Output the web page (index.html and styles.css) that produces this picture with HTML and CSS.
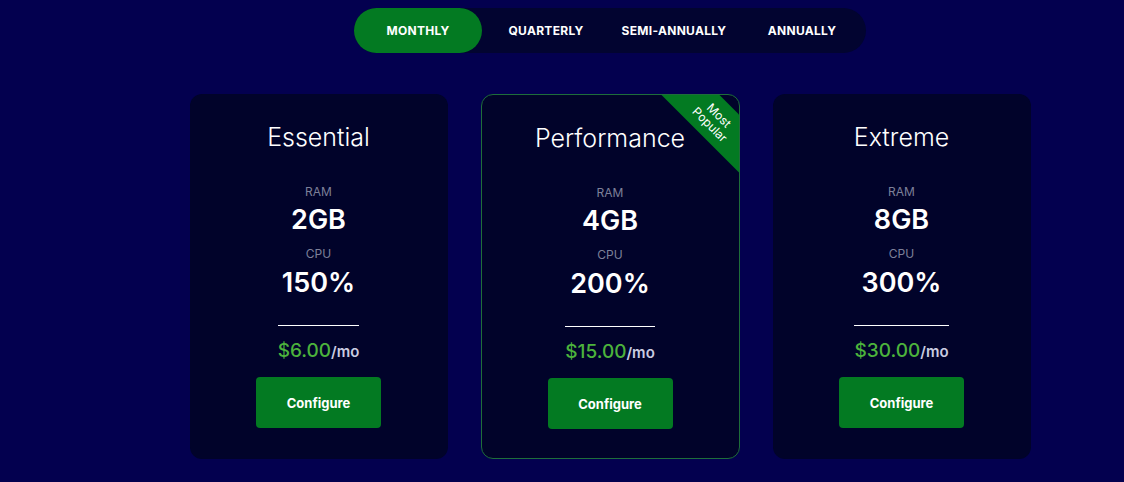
FILE: index.html
```html
<!DOCTYPE html>
<html lang="en">
<head>
    <meta charset="UTF-8">
    <meta name="viewport" content="width=device-width, initial-scale=1.0">
    <title>Plans</title>
    <link rel="stylesheet" href="styles.css">
</head>
<body>
    <div class="page">
        <div class="billing">
            <button class="tab active">Monthly</button>
            <button class="tab">Quarterly</button>
            <button class="tab">Semi-Annually</button>
            <button class="tab">Annually</button>
        </div>

        <div class="plans">
            <div class="plan">
                <h2>Essential</h2>
                <span class="spec-label">RAM</span>
                <span class="spec-value">2GB</span>
                <span class="spec-label">CPU</span>
                <span class="spec-value">150%</span>
                <div class="price"><span class="amount">$6.00</span>/mo</div>
                <a class="configure" href="#">Configure</a>
            </div>

            <div class="plan popular">
                <div class="ribbon">Most<br>Popular</div>
                <h2>Performance</h2>
                <span class="spec-label">RAM</span>
                <span class="spec-value">4GB</span>
                <span class="spec-label">CPU</span>
                <span class="spec-value">200%</span>
                <div class="price"><span class="amount">$15.00</span>/mo</div>
                <a class="configure" href="#">Configure</a>
            </div>

            <div class="plan">
                <h2>Extreme</h2>
                <span class="spec-label">RAM</span>
                <span class="spec-value">8GB</span>
                <span class="spec-label">CPU</span>
                <span class="spec-value">300%</span>
                <div class="price"><span class="amount">$30.00</span>/mo</div>
                <a class="configure" href="#">Configure</a>
            </div>
        </div>
    </div>
</body>
</html>
```

FILE: styles.css
```css
/* General */
body {
    margin: 0;
    padding: 0;
    background-color: #03004f;
    font-family: 'Inter', 'Noto Sans', sans-serif;
    color: #ffffff;
}

.page {
    display: flex;
    flex-direction: column;
    align-items: center;
    padding: 8px 0 0 96px;
}

/* Billing toggle */
.billing {
    display: flex;
    background-color: #020430;
    border-radius: 23px;
}

.tab {
    width: 128px;
    height: 45px;
    border: none;
    border-radius: 23px;
    background: transparent;
    color: #ffffff;
    font-family: inherit;
    font-size: 12px;
    font-weight: 700;
    letter-spacing: 0.3px;
    text-transform: uppercase;
    cursor: pointer;
}

.tab.active {
    background-color: #037a22;
}

/* Plans */
.plans {
    display: flex;
    gap: 33px;
    margin-top: 41px;
}

.plan {
    position: relative;
    overflow: hidden;
    box-sizing: border-box;
    width: 258px;
    display: flex;
    flex-direction: column;
    align-items: center;
    padding: 25px 0 29px;
    background-color: #01032a;
    border-radius: 12px;
}

.plan.popular {
    width: 259px;
    border: 1px solid #1e6e3a;
}

.plan h2 {
    margin: 0;
    font-size: 25px;
    font-weight: 300;
    line-height: 36px;
}

.spec-label {
    margin-top: 29px;
    font-size: 12px;
    line-height: 16px;
    color: #7d8099;
}

.spec-value {
    margin-top: 4px;
    font-size: 27px;
    font-weight: 600;
    line-height: 32px;
}

.spec-value + .spec-label {
    margin-top: 10px;
}

.spec-label + .spec-value + .spec-label + .spec-value {
    margin-top: 5px;
}

.price {
    margin-top: 26px;
    padding-top: 13px;
    border-top: 1px solid #ffffff;
    font-size: 15px;
    font-weight: 600;
    line-height: 24px;
    color: #c9cbe0;
}

.amount {
    font-size: 19px;
    font-weight: 500;
    color: #4cb33c;
}

.configure {
    display: flex;
    align-items: center;
    justify-content: center;
    width: 125px;
    height: 51px;
    margin-top: 13px;
    background-color: #037a22;
    border-radius: 4px;
    color: #ffffff;
    font-size: 13px;
    font-weight: 700;
    text-decoration: none;
}

.ribbon {
    position: absolute;
    top: 4px;
    right: -46px;
    width: 140px;
    height: 41px;
    display: flex;
    align-items: center;
    justify-content: center;
    text-align: center;
    background-color: #037a22;
    font-size: 12px;
    line-height: 13px;
    transform: rotate(45deg);
}
```
